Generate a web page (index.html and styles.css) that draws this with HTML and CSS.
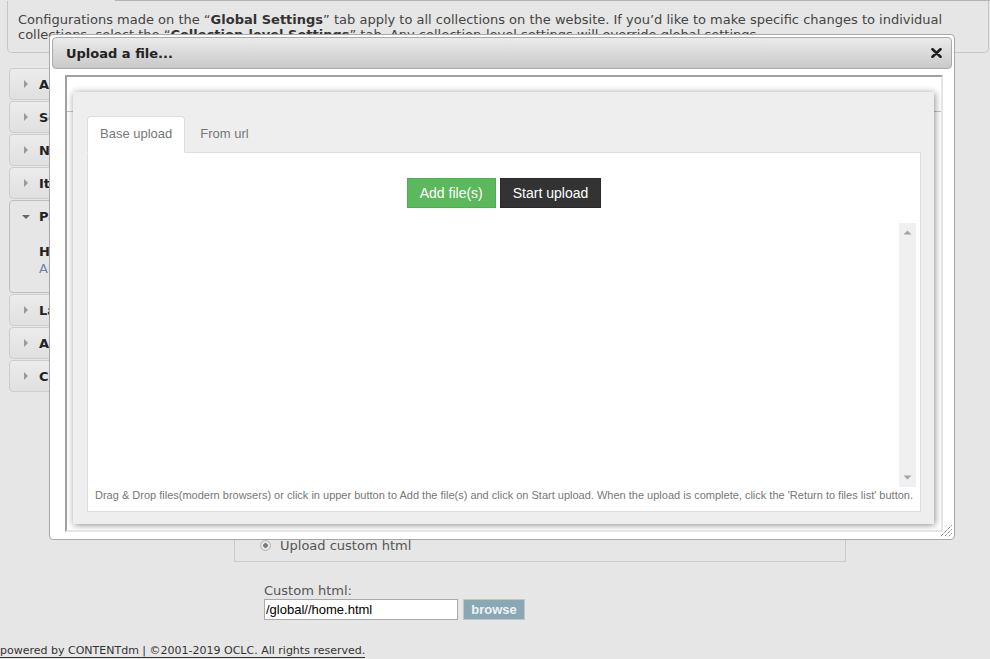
FILE: index.html
```html
<!DOCTYPE html>
<html lang="en">
<head>
<meta charset="utf-8">
<title>Website Configuration Tool</title>
<link rel="stylesheet" href="styles.css">
</head>
<body>
<div class="topline"></div>
<div class="notice">Configurations made on the “<b>Global Settings</b>” tab apply to all collections on the website. If you’d like to make specific changes to individual collections, select the “<b>Collection-level Settings</b>” tab. Any collection-level settings will override global settings.</div>

<div class="layout">
  <nav class="sidebar">
    <div class="acc"><span class="tri"></span>Appearance</div>
    <div class="acc"><span class="tri"></span>Search</div>
    <div class="acc"><span class="tri"></span>Navigation</div>
    <div class="acc"><span class="tri"></span>Items</div>
    <div class="acc open">
      <div class="acc-head"><span class="tri down"></span>Pages</div>
      <div class="acc-body">
        <div class="current">Home page</div>
        <a class="sub-link" href="#">About</a>
      </div>
    </div>
    <div class="acc"><span class="tri"></span>Language</div>
    <div class="acc"><span class="tri"></span>Advanced</div>
    <div class="acc"><span class="tri"></span>Custom pages</div>
  </nav>

  <main class="main">
    <h3 class="main-title">Home page</h3>
    <div class="preview"></div>
    <div class="home-box">
      <div class="opt"><span class="radio"></span>Use default home page</div>
      <div class="opt"><span class="radio checked"></span>Upload custom html</div>
    </div>
    <div class="custom">
      <div class="custom-label">Custom html:</div>
      <div class="custom-row">
        <input class="custom-input" type="text" value="/global//home.html">
        <button class="browse" type="button">browse</button>
      </div>
    </div>
  </main>
</div>

<footer class="footer"><a class="footer-link" href="#">powered by CONTENTdm | ©2001-2019 OCLC. All rights reserved.</a></footer>

<div class="dialog">
  <div class="dlg-head">
    <span class="dlg-title">Upload a file...</span>
    <svg class="dlg-close" width="11" height="10" viewBox="0 0 11 10"><path d="M1.5 1.2 L9.5 8.8 M9.5 1.2 L1.5 8.8" stroke="#1e1e1e" stroke-width="2.6" stroke-linecap="round"/></svg>
  </div>
  <div class="frame">
    <div class="frame-bar"></div>
    <div class="upload-panel">
      <div class="tabs">
        <div class="tab active">Base upload</div>
        <div class="tab">From url</div>
      </div>
      <div class="pane">
        <div class="btns">
          <button class="btn btn-green" type="button">Add file(s)</button>
          <button class="btn btn-dark" type="button">Start upload</button>
        </div>
        <div class="file-list">
          <div class="scrollbar">
            <svg width="9" height="5" viewBox="0 0 9 5"><path d="M0.5 4.5 L4.5 0.5 L8.5 4.5 Z" fill="#a3a3a3"/></svg>
            <svg width="9" height="5" viewBox="0 0 9 5"><path d="M0.5 0.5 L4.5 4.5 L8.5 0.5 Z" fill="#a3a3a3"/></svg>
          </div>
        </div>
        <div class="note">Drag &amp; Drop files(modern browsers) or click in upper button to Add the file(s) and click on Start upload. When the upload is complete, click the 'Return to files list' button.</div>
      </div>
    </div>
  </div>
  <svg class="grip" width="12" height="12" viewBox="0 0 12 12"><path d="M11.5 0.5 L0.5 11.5 M11.5 4.5 L4.5 11.5 M11.5 8.5 L8.5 11.5" stroke="#444" stroke-width="1" stroke-dasharray="1 1"/></svg>
</div>
</body>
</html>
```

FILE: styles.css
```css
html, body {
  margin: 0;
  padding: 0;
}

body {
  background: #e6e6e6;
  font-family: "DejaVu Sans", Verdana, sans-serif;
  font-size: 13px;
  color: #333;
  min-height: 659px;
}

.topline {
  margin-left: 115px;
  border-top: 1px solid #b3b3b3;
}

.notice {
  margin: 0 1px 0 7px;
  border: 1px solid #c6c6c6;
  border-top: 0;
  border-radius: 0 0 5px 5px;
  padding: 11px 10px 10px;
  line-height: 15px;
  color: #444;
}

.notice b {
  color: #333;
}

.layout {
  display: flex;
  gap: 10px;
  padding: 15px 0 0 9px;
}

.sidebar {
  width: 215px;
  flex: none;
  display: flex;
  flex-direction: column;
  gap: 1px;
}

.acc {
  height: 32px;
  box-sizing: border-box;
  border: 1px solid #cdcdcd;
  border-radius: 4px;
  background: linear-gradient(#ececec, #e0e0e0);
  display: flex;
  align-items: center;
  padding-left: 14px;
  font-weight: bold;
  color: #222;
  white-space: nowrap;
}

.tri {
  width: 0;
  height: 0;
  border-left: 4px solid #9a9a9a;
  border-top: 4px solid transparent;
  border-bottom: 4px solid transparent;
  margin-right: 11px;
}

.tri.down {
  border-left: 4px solid transparent;
  border-right: 4px solid transparent;
  border-top: 4px solid #666;
  border-bottom: 0;
  margin-right: 9px;
}

.acc.open {
  height: auto;
  display: block;
  padding: 0;
  background: #e6e6e6;
  border-color: #bdbdbd;
}

.acc-head {
  height: 31px;
  display: flex;
  align-items: center;
  padding-left: 12px;
}

.acc-body {
  padding: 11px 0 15px 29px;
  line-height: 17px;
}

.current {
  font-weight: bold;
  color: #222;
}

.sub-link {
  font-weight: normal;
  color: #6f83ab;
  text-decoration: none;
}

.main {
  width: 612px;
  flex: none;
}

.main-title {
  margin: 0 0 10px;
  font-size: 16px;
  line-height: 20px;
}

.preview {
  height: 388px;
  margin-bottom: 15px;
  background: #fff;
}

.home-box {
  border: 1px solid #c7ccd1;
  padding: 10px 0 5px 25px;
}

.opt {
  height: 22px;
  display: flex;
  align-items: center;
  color: #555;
}

.radio {
  width: 11px;
  height: 11px;
  box-sizing: border-box;
  border-radius: 50%;
  border: 1px solid #b4b4b4;
  background: #ececec;
  margin-right: 9px;
}

.radio.checked {
  background: radial-gradient(circle, #7a7a7a 0 2px, #e6e6e6 2.6px);
}

.custom {
  margin: 21px 0 0 30px;
}

.custom-label {
  line-height: 16px;
  color: #555;
}

.custom-row {
  display: flex;
  gap: 5px;
}

.custom-input {
  width: 194px;
  height: 21px;
  box-sizing: border-box;
  margin: 0;
  border: 1px solid #a9a9a9;
  padding: 0 1px;
  background: #fff;
  font-family: "Liberation Sans", Arial, sans-serif;
  font-size: 13px;
  color: #000;
}

.browse {
  width: 62px;
  height: 21px;
  box-sizing: border-box;
  margin: 0;
  padding: 0;
  border: 1px solid #c4c4c4;
  background: #8aa7b4;
  color: #eef3f5;
  font-family: "Liberation Sans", Arial, sans-serif;
  font-size: 13px;
  font-weight: bold;
}

.footer {
  margin-top: 24px;
  font-size: 11px;
  line-height: 14px;
}

.footer-link {
  color: #333;
  text-decoration: none;
  border-bottom: 1px solid #333;
}

/* Dialog */
.dialog {
  position: absolute;
  left: 49px;
  top: 34px;
  width: 906px;
  height: 506px;
  box-sizing: border-box;
  border: 1px solid #a8a8a8;
  border-radius: 4px;
  background: #fff;
  padding: 2px;
}

.dlg-head {
  height: 32px;
  box-sizing: border-box;
  border: 1px solid #aaa;
  border-radius: 4px;
  background: linear-gradient(#ebebeb, #c9c9c9);
  display: flex;
  align-items: center;
  justify-content: space-between;
  padding: 0 9px 0 13px;
  font-weight: bold;
  color: #222;
}

.dlg-close {
  display: block;
}

.frame {
  position: relative;
  margin: 6px 9px 0 13px;
  height: 457px;
  box-sizing: border-box;
  border: 2px solid;
  border-color: #a0a0a0 #e6e6e6 #e6e6e6 #a0a0a0;
  background: #fff;
  overflow: hidden;
}

.frame-bar {
  height: 34px;
  border-bottom: 1px solid #c4c4c4;
}

.upload-panel {
  position: absolute;
  left: 6px;
  top: 15px;
  width: 861px;
  height: 432px;
  box-sizing: border-box;
  background: #eee;
  box-shadow: 1px 1px 7px rgba(0, 0, 0, 0.45);
  padding: 24px 13px 12px 14px;
  display: flex;
  flex-direction: column;
  font-family: "Liberation Sans", Arial, sans-serif;
}

.tabs {
  display: flex;
  border-bottom: 1px solid #ddd;
}

.tab {
  margin: 0 2px -1px 0;
  border: 1px solid transparent;
  border-radius: 4px 4px 0 0;
  padding: 8px 12px 10px;
  line-height: 17px;
  font-size: 13px;
  color: #777;
}

.tab.active {
  background: #fff;
  border-color: #ddd #ddd #fff;
}

.pane {
  flex: 1;
  display: flex;
  flex-direction: column;
  border: 1px solid #ddd;
  border-top: 0;
  background: #fff;
}

.btns {
  margin-top: 25px;
  display: flex;
  justify-content: center;
  gap: 4px;
}

.btn {
  height: 30px;
  box-sizing: border-box;
  margin: 0;
  padding: 0 12px;
  border: 1px solid;
  font-family: "Liberation Sans", Arial, sans-serif;
  font-size: 14px;
  line-height: 28px;
  color: #fff;
}

.btn-green {
  background: #5cb85c;
  border-color: #4cae4c;
}

.btn-dark {
  background: #333;
  border-color: #2a2a2a;
}

.file-list {
  margin: 15px 4px 0 7px;
  height: 264px;
  display: flex;
  justify-content: flex-end;
}

.scrollbar {
  width: 17px;
  background: #f0f0f0;
  display: flex;
  flex-direction: column;
  justify-content: space-between;
  align-items: center;
  padding: 7px 0 7px;
  box-sizing: border-box;
}

.scrollbar svg {
  display: block;
}

.note {
  margin: 1px 0 0 7px;
  font-size: 11px;
  line-height: 14px;
  color: #777;
  white-space: nowrap;
}

.grip {
  position: absolute;
  right: 2px;
  bottom: 2px;
  display: block;
}
```
